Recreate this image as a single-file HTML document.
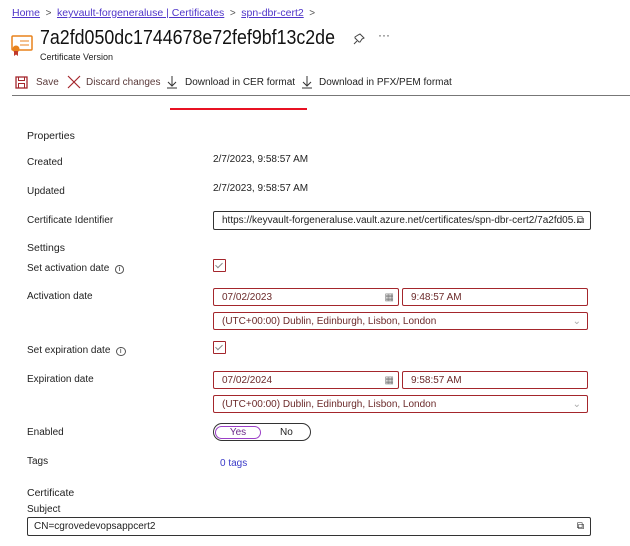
<!DOCTYPE html>
<html><head><style>
body{margin:0;width:630px;height:546px;background:#fff;font-family:"Liberation Sans",sans-serif;color:#222;position:relative;overflow:hidden;font-size:10px}
.a{position:absolute;white-space:nowrap}
.lnk{color:#4f35c9;text-decoration:underline;font-size:10.5px}
.box{position:absolute;border:1px solid #a4262c;border-radius:2px;box-sizing:border-box;color:#6b2a2a;font-size:10px;padding-left:8px;line-height:17px}
.cb{position:absolute;width:13px;height:13px;border:1px solid #a4262c;box-sizing:border-box;border-radius:1px}
.cb:after{content:"";position:absolute;left:3px;top:1px;width:3px;height:6px;border:solid #888;border-width:0 1px 1px 0;transform:rotate(45deg)}
</style></head><body>
<div class="a" style="left:12px;top:7px"><span class="lnk">Home</span> <span style="color:#555">&nbsp;&gt;&nbsp;</span> <span class="lnk">keyvault-forgeneraluse | Certificates</span> <span style="color:#555">&nbsp;&gt;&nbsp;</span> <span class="lnk">spn-dbr-cert2</span> <span style="color:#555">&nbsp;&gt;</span></div>
<svg class="a" style="left:11px;top:34px" width="22" height="22"><rect x="1" y="2" width="20" height="14" rx="1" fill="#fff" stroke="#e8821c" stroke-width="1.5"/><line x1="9" y1="7" x2="18" y2="7" stroke="#e8821c"/><line x1="9" y1="11" x2="18" y2="11" stroke="#e8821c"/><circle cx="5" cy="15" r="3.5" fill="#e8821c"/><path d="M3 17v5l2-1.5 2 1.5v-5" fill="#c0392b"/></svg>
<div class="a" style="left:40px;top:27px;font-size:20px;color:#111;transform:scaleX(0.89);transform-origin:0 0">7a2fd050dc1744678e72fef9bf13c2de</div>
<svg class="a" style="left:353px;top:33px" width="12" height="12"><path d="M7 1l4 4-2 1-2 3-1 0-4-4 0-1 3-2zM4 8l-3 3" stroke="#444" fill="none" stroke-width="1"/></svg>
<div class="a" style="left:378px;top:28px;font-size:12px;color:#444">···</div>
<div class="a" style="left:40px;top:52px;font-size:9px">Certificate Version</div>
<svg class="a" style="left:15px;top:76px" width="14" height="14"><rect x="1" y="1" width="11" height="11" fill="none" stroke="#a4262c" stroke-width="1.3"/><rect x="3.5" y="1" width="6" height="3.5" fill="none" stroke="#a4262c"/><rect x="3.5" y="7.5" width="6" height="4.5" fill="none" stroke="#a4262c"/></svg>
<div class="a" style="left:36px;top:77px;color:#5a3a3a">Save</div>
<svg class="a" style="left:67px;top:75px" width="14" height="14"><path d="M1 1L13 13M13 1L1 13" stroke="#a4262c" stroke-width="1.2"/></svg>
<div class="a" style="left:86px;top:77px;color:#5a3a3a">Discard changes</div>
<svg class="a" style="left:166px;top:75px" width="12" height="14"><path d="M6 1v10M2 7l4 4 4-4M1 13h10" stroke="#333" fill="none" stroke-width="1"/></svg>
<div class="a" style="left:185px;top:77px">Download in CER format</div>
<svg class="a" style="left:301px;top:75px" width="12" height="14"><path d="M6 1v10M2 7l4 4 4-4M1 13h10" stroke="#333" fill="none" stroke-width="1"/></svg>
<div class="a" style="left:319px;top:77px">Download in PFX/PEM format</div>
<div class="a" style="left:12px;top:95px;width:618px;height:1px;background:#777"></div>
<div class="a" style="left:170px;top:108px;width:137px;height:2px;background:#e81123"></div>
<div class="a" style="left:27px;top:130px;font-size:10.5px">Properties</div>
<div class="a" style="left:27px;top:157px">Created</div><div class="a" style="left:213px;top:154px">2/7/2023, 9:58:57 AM</div>
<div class="a" style="left:27px;top:186px">Updated</div><div class="a" style="left:213px;top:183px">2/7/2023, 9:58:57 AM</div>
<div class="a" style="left:27px;top:215px">Certificate Identifier</div>
<div class="box" style="left:213px;top:211px;width:378px;height:19px;border-color:#333;color:#222">https://keyvault-forgeneraluse.vault.azure.net/certificates/spn-dbr-cert2/7a2fd05...<span style="position:absolute;right:6px">⧉</span></div>
<div class="a" style="left:27px;top:242px;font-size:10.5px">Settings</div>
<div class="a" style="left:27px;top:263px">Set activation date &nbsp;<span style="border:1px solid #555;border-radius:50%;font-size:7px;padding:0 3px">i</span></div>
<div class="cb" style="left:213px;top:259px"></div>
<div class="a" style="left:27px;top:291px">Activation date</div>
<div class="box" style="left:213px;top:288px;width:186px;height:18px">07/02/2023<span style="position:absolute;right:4px;color:#777">▦</span></div>
<div class="box" style="left:402px;top:288px;width:186px;height:18px">9:48:57 AM</div>
<div class="box" style="left:213px;top:312px;width:375px;height:18px">(UTC+00:00) Dublin, Edinburgh, Lisbon, London<span style="position:absolute;right:6px;color:#aaa">⌄</span></div>
<div class="a" style="left:27px;top:345px">Set expiration date &nbsp;<span style="border:1px solid #555;border-radius:50%;font-size:7px;padding:0 3px">i</span></div>
<div class="cb" style="left:213px;top:341px"></div>
<div class="a" style="left:27px;top:374px">Expiration date</div>
<div class="box" style="left:213px;top:371px;width:186px;height:18px">07/02/2024<span style="position:absolute;right:4px;color:#777">▦</span></div>
<div class="box" style="left:402px;top:371px;width:186px;height:18px">9:58:57 AM</div>
<div class="box" style="left:213px;top:395px;width:375px;height:18px">(UTC+00:00) Dublin, Edinburgh, Lisbon, London<span style="position:absolute;right:6px;color:#aaa">⌄</span></div>
<div class="a" style="left:27px;top:427px">Enabled</div>
<div class="a" style="left:213px;top:423px;width:98px;height:18px;border:1px solid #333;border-radius:9px;box-sizing:border-box"></div>
<div class="a" style="left:215px;top:426px;width:46px;height:13px;border:1px solid #9b3fc7;border-radius:7px;box-sizing:border-box;text-align:center;line-height:11px;color:#6b2a8a">Yes</div>
<div class="a" style="left:280px;top:427px">No</div>
<div class="a" style="left:27px;top:456px">Tags</div>
<div class="a" style="left:220px;top:458px;color:#3a3ac8">0 tags</div>
<div class="a" style="left:27px;top:487px;font-size:10.5px">Certificate</div>
<div class="a" style="left:27px;top:504px">Subject</div>
<div class="box" style="left:27px;top:517px;width:564px;height:19px;border-color:#333;color:#222;padding-left:6px">CN=cgrovedevopsappcert2<span style="position:absolute;right:6px">⧉</span></div>
</body></html>
